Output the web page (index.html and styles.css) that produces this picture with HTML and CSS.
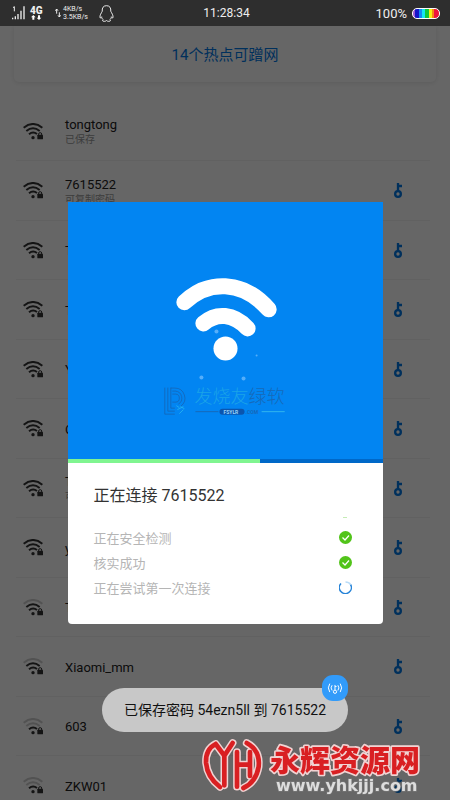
FILE: index.html
```html
<!DOCTYPE html>
<html lang="zh-CN">
<head>
<meta charset="utf-8">
<meta name="viewport" content="width=device-width, initial-scale=1">
<title>正在连接 7615522</title>
<link rel="stylesheet" href="styles.css">
</head>
<body>
<svg class="defs" aria-hidden="true">
  <symbol id="lock" viewBox="0 0 60 51">
    <circle cx="30" cy="44" r="5" fill="currentColor" stroke="none"/>
    <rect x="43" y="35" width="17" height="14" rx="2" fill="currentColor" stroke="none"/>
    <path d="M47 37v-4q0-4 4.500-4t4.500 4v4" stroke-width="3"/>
  </symbol>
  <symbol id="wifi-4" viewBox="0 0 60 51">
    <path d="M2 14Q30-8 58 14M10 24Q30 8 50 24M18 34Q30 24 42 33"/><use href="#lock"/>
  </symbol>
  <symbol id="wifi-3" viewBox="0 0 60 51">
    <path d="M2 14Q30-8 58 14" opacity=".25"/><path d="M10 24Q30 8 50 24M18 34Q30 24 42 33"/><use href="#lock"/>
  </symbol>
  <symbol id="wifi-2" viewBox="0 0 60 51">
    <path d="M2 14Q30-8 58 14M10 24Q30 8 50 24" opacity=".25"/><path d="M18 34Q30 24 42 33"/><use href="#lock"/>
  </symbol>
  <symbol id="key" viewBox="0 0 24 45">
    <circle cx="12" cy="33" r="8.500"/><path d="M12 25V0M12 9h12"/>
  </symbol>
  <symbol id="check" viewBox="0 0 26 26">
    <circle cx="13" cy="13" r="13" fill="#52c41a"/>
    <path d="M7 13l5 5 8-9" fill="none" stroke="#fff" stroke-width="2.500"/>
  </symbol>
</svg>

<header class="status">
  <svg class="signal" viewBox="0 0 42 48" aria-hidden="true">
    <path d="M3 8l4-3v14" fill="none" stroke="#eee" stroke-width="3"/>
    <path d="M2 43v-5M10 43v-9M18 43V27M27 43V17M36 43V4" fill="none" stroke="#eee" stroke-width="4"/>
  </svg>
  <div class="network"><span>4G</span>
    <svg viewBox="0 0 36 15" aria-hidden="true"><path d="M10 0l7 7h-4v7H7V7H3zM27 15l-7-7h4V1h6v7h4z" fill="#fff"/></svg>
  </div>
  <svg class="traffic" viewBox="0 0 18 30" aria-hidden="true"><path d="M5 17V3M1 8l4-5 4 5M13 13v14M9 22l4 5 4-5" fill="none" stroke="#eee" stroke-width="3"/></svg>
  <div class="speed"><span>4KB/s</span><span>3.5KB/s</span></div>
  <svg class="penguin" viewBox="0 0 46 52" aria-hidden="true"><path d="M23 2C13 2 9 9 10 19c-3 6-8 12-7 20 1 2 3-1 5-3 0 4 2 7 5 9-5 3-1 5 3 5 4 0 6-1 7-3 1 2 3 3 7 3 4 0 8-2 3-5 3-2 5-5 5-9 2 2 4 5 5 3 1-8-4-14-7-20C37 9 33 2 23 2z" fill="none" stroke="#eee" stroke-width="3"/></svg>
  <time class="clock">11:28:34</time>
  <span class="percent">100%</span>
  <span class="battery"></span>
</header>

<main class="page">
  <h1 class="summary">14个热点可蹭网</h1>
  <ul class="list">
    <li><svg class="wifi"><use href="#wifi-4"/></svg><div class="name">tongtong<small>已保存</small></div></li>
    <li><svg class="wifi"><use href="#wifi-4"/></svg><div class="name">7615522<small>可复制密码</small></div><svg class="key"><use href="#key"/></svg></li>
    <li><svg class="wifi"><use href="#wifi-4"/></svg><div class="name">T</div><svg class="key"><use href="#key"/></svg></li>
    <li><svg class="wifi"><use href="#wifi-4"/></svg><div class="name">T</div><svg class="key"><use href="#key"/></svg></li>
    <li><svg class="wifi"><use href="#wifi-4"/></svg><div class="name">Y</div><svg class="key"><use href="#key"/></svg></li>
    <li><svg class="wifi"><use href="#wifi-4"/></svg><div class="name">C</div><svg class="key"><use href="#key"/></svg></li>
    <li><svg class="wifi"><use href="#wifi-4"/></svg><div class="name">T<small>可</small></div><svg class="key"><use href="#key"/></svg></li>
    <li><svg class="wifi"><use href="#wifi-4"/></svg><div class="name">y</div><svg class="key"><use href="#key"/></svg></li>
    <li><svg class="wifi"><use href="#wifi-3"/></svg><div class="name">T</div><svg class="key"><use href="#key"/></svg></li>
    <li><svg class="wifi"><use href="#wifi-3"/></svg><div class="name">Xiaomi_mm</div><svg class="key"><use href="#key"/></svg></li>
    <li><svg class="wifi"><use href="#wifi-2"/></svg><div class="name">603</div><svg class="key"><use href="#key"/></svg></li>
    <li><svg class="wifi"><use href="#wifi-2"/></svg><div class="name">ZKW01</div><svg class="key"><use href="#key"/></svg></li>
  </ul>
</main>

<div class="scrim">
  <section class="dialog" role="dialog" aria-labelledby="dialog-title">
    <svg class="hero" viewBox="68 201 314 257" aria-hidden="true">
      <g fill="none" stroke="#fff" stroke-width="16" stroke-linecap="round">
        <path d="M184 301C207 279 242 278 268 308"/>
        <path d="M203 322C216 311 233 312 247 327"/>
      </g>
      <circle cx="225" cy="347" r="12" fill="#fff"/>
      <g fill="#55aefa">
        <circle cx="216" cy="330" r="2"/><circle cx="201" cy="376" r="2"/><circle cx="243" cy="377" r="2"/><circle cx="256" cy="354" r="1"/>
      </g>
      <g fill="none" stroke="#1765b5" stroke-width=".8">
        <path d="M164.500 386v26.500h10M167.500 386v23.500h7M170.500 386v20.500h4M170.500 386.500h4a10 10 0 0 1 6 18M172 389.500h3a7 7 0 0 1 3 13M172 392.500h3a4 4 0 0 1 0 8h-3"/>
        <path d="M176 404l3 2M180 405l4 2M177 408l6-3M179 412l4-4" stroke="#28b5ef"/>
      </g>
      <text class="mark" x="194" y="401"><tspan fill="#1ba3e8">发烧友</tspan><tspan fill="#1769b8">绿软</tspan></text>
      <path d="M195 410h23" stroke="#1769b8"/><path d="M261 410h23" stroke="#31b6ee"/>
      <rect x="219" y="407" width="25" height="6" rx="3" fill="#0b55ae"/>
      <text class="mark-small" x="223" y="412" fill="#9bd4fa">FSYLR</text>
      <text class="mark-small" x="245" y="412" fill="#1769b8">.COM</text>
    </svg>
    <div class="bar"><div class="fill"></div></div>
    <div class="body">
      <h2 id="dialog-title">正在连接 7615522</h2>
      <div class="earlier"></div>
      <ul class="steps">
        <li>正在安全检测<svg class="state"><use href="#check"/></svg></li>
        <li>核实成功<svg class="state"><use href="#check"/></svg></li>
        <li>正在尝试第一次连接<svg class="state" viewBox="0 0 26 26"><path d="M4 5A12 12 0 1 0 23 7" fill="none" stroke="#2784d8" stroke-width="3"/><path d="M23 7Q20 2 13 2" fill="none" stroke="#b9dcf8" stroke-width="3"/></svg></li>
      </ul>
    </div>
  </section>
</div>

<div class="toast" role="status">已保存密码 54ezn5ll 到 7615522
  <span class="badge"><svg viewBox="0 0 48 40" aria-hidden="true"><g fill="none" stroke="#fff" stroke-width="3"><circle cx="24" cy="30" r="5"/><path d="M24 25V9M24 14h5M15 10q-6 8 0 16M33 10q6 8 0 16M8 5q-9 13 0 26M40 5q9 13 0 26"/></g></svg></span>
</div>

<svg class="sitemark" viewBox="0 0 750 210" role="img" aria-label="永辉资源网">
  <defs>
    <g id="emblem">
      <path d="M47 42Q16 58 18 98Q22 142 60 171M47 42L73 77L98 39M73 77V166M111 66V170M112 104H150M150 66V138M140 39Q181 61 176 110Q168 157 130 174"/>
    </g>
  </defs>
  <g fill="none" stroke-linejoin="round" stroke-linecap="round">
    <use href="#emblem" stroke="#f1d3d3" stroke-width="23"/>
    <use href="#emblem" stroke="#d91f22" stroke-width="14"/>
  </g>
  <text class="site-name" x="210" y="123">永辉资源网</text>
  <text class="site-url" x="228" y="183">www.yhkjjj.com</text>
</svg>
</body>
</html>
```

FILE: styles.css
```css
* { box-sizing: border-box; }
body {
  margin: 0;
  height: 100vh;
  overflow: hidden;
  background: #fff;
  color: #222;
  font-family: Roboto, "Noto Sans CJK SC", sans-serif;
}
h1, h2, ul { margin: 0; padding: 0; font-weight: 400; list-style: none; }
.defs { position: absolute; width: 0; height: 0; }

.status {
  display: flex;
  align-items: center;
  position: relative;
  height: 26px;
  padding: 0 10px 0 12px;
  background: #2e2e2e;
  color: #eee;
  font-size: 12px;
}
.signal { width: 14px; height: 16px; }
.network { margin-left: 4px; width: 14px; font-size: 10px; font-weight: 900; line-height: 9px; }
.network span, .network svg { display: block; }
.network svg { width: 12px; height: 5px; }
.traffic { width: 6px; height: 10px; margin-left: 11px; }
.speed { margin-left: 2px; font-size: 7px; line-height: 8px; }
.speed span { display: block; }
.penguin { width: 15px; height: 17px; margin-left: 11px; }
.clock { position: absolute; left: 0; right: 0; padding-left: 3px; text-align: center; }
.percent { margin-left: auto; font-size: 13px; }
.battery {
  width: 28px;
  height: 11px;
  margin-left: 5px;
  border: 1px solid #fff;
  border-radius: 5px;
  background: linear-gradient(90deg, #9b5ad0 0 8%, #1414c8 8% 22%, #1687f0 22% 34%, #14e6f0 34% 46%, #10c83c 46% 62%, #f5f014 62% 72%, #f58a14 72% 82%, #f0143c 82%);
}

.page { padding: 0 14px; }
.summary {
  height: 56px;
  padding-top: 18px;
  border-radius: 0 0 5px 5px;
  box-shadow: 0 1px 5px rgba(0, 0, 0, .1);
  color: #0078e6;
  font-size: 15px;
  line-height: 22px;
  text-align: center;
}
.list { margin-top: 20px; }
.list li {
  display: flex;
  align-items: center;
  height: 59px;
  margin: 0 6px 0 2px;
  padding: 0 26px 0 7px;
  border-bottom: 1px solid #f2f2f2;
}
.list li:nth-child(even) { height: 60px; }
.wifi { width: 20px; height: 17px; fill: none; color: #333; stroke: #333; stroke-width: 6; }
.name { flex: 1; margin-left: 22px; padding-top: 2px; font-size: 13px; line-height: 16px; }
.name small { display: block; color: #999; font-size: 10px; line-height: 14px; }
.key { width: 8px; height: 15px; margin-right: 2px; fill: none; stroke: #0078e6; stroke-width: 7; }

.scrim {
  position: fixed;
  inset: 26px 0 0;
  display: flex;
  align-items: center;
  justify-content: center;
  background: rgba(0, 0, 0, .6);
}
.dialog { width: 70%; overflow: hidden; border-radius: 0 0 4px 4px; background: #fff; }
.hero { display: block; width: 100%; background: #0285f2; }
.mark { font-family: "Noto Sans CJK SC", sans-serif; font-size: 18px; font-weight: 300; }
.mark-small { font-size: 5px; font-weight: 700; }
.bar { height: 4px; background: #0068c8; }
.fill { width: 61%; height: 100%; background: #80f590; }
.body { padding: 23px 31px 24px 26px; }
.body h2 { color: #333; font-size: 16px; line-height: 20px; }
.earlier { width: 4px; height: 1px; margin: 11px 5px 7px auto; background: #c5ecb5; }
.steps li {
  display: flex;
  align-items: center;
  justify-content: space-between;
  height: 25px;
  color: #b5b5b5;
  font-size: 13px;
}
.state { width: 13px; height: 13px; }

.toast {
  position: fixed;
  left: 50%;
  bottom: 68px;
  transform: translateX(-50%);
  padding: 0 22px;
  border-radius: 22px;
  background: #c8c8c8;
  color: #111;
  font-size: 14px;
  line-height: 44px;
  white-space: nowrap;
}
.badge {
  position: absolute;
  top: -13px;
  right: 0;
  display: flex;
  align-items: center;
  justify-content: center;
  width: 26px;
  height: 26px;
  border-radius: 11px;
  background: #329bfa;
}
.badge svg { width: 16px; height: 13px; }

.sitemark { position: fixed; right: 0; bottom: 0; width: 250px; height: 70px; }
.site-name {
  fill: #d91f22;
  stroke: #f1d3d3;
  stroke-width: 10px;
  stroke-linejoin: round;
  paint-order: stroke;
  font: 900 90px "Noto Sans CJK SC", sans-serif;
}
.site-url {
  fill: #ddd;
  stroke: #777;
  stroke-width: 4px;
  paint-order: stroke;
  font: 700 48px "DejaVu Sans", sans-serif;
}
```
